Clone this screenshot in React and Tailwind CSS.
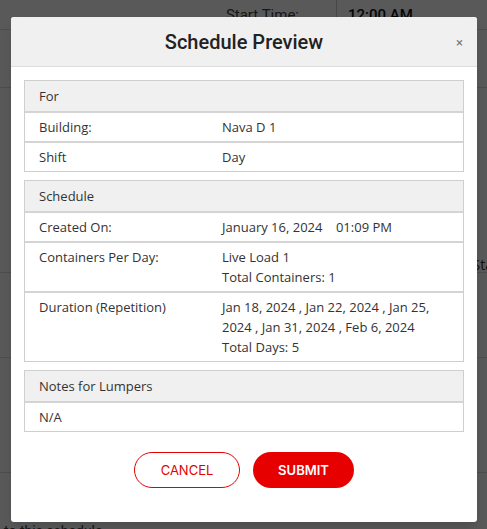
import React from "react"

const sections = [
  {
    title: "For",
    rows: [
      { label: "Building:", value: ["Nava D 1"] },
      { label: "Shift", value: ["Day"] }
    ]
  },
  {
    title: "Schedule",
    rows: [
      { label: "Created On:", value: ["January 16, 2024\u00a0\u00a0\u00a0\u00a001:09 PM"] },
      { label: "Containers Per Day:", value: ["Live Load 1", "Total Containers: 1"] },
      {
        label: "Duration (Repetition)",
        value: ["Jan 18, 2024 , Jan 22, 2024 , Jan 25, 2024 , Jan 31, 2024 , Feb 6, 2024", "Total Days: 5"]
      }
    ]
  },
  {
    title: "Notes for Lumpers",
    rows: [{ value: ["N/A"] }]
  }
]

function Section({ title, rows }) {
  return (
    <div className="border border-[#cfcfcf]">
      <div className="bg-[#f0f0f0] px-[14px] py-[5px]">{title}</div>
      {rows.map((row, i) => (
        <div
          key={i}
          className={
            row.label
              ? "grid grid-cols-[183px_1fr] border-t-2 border-[#d4d4d4] px-[14px] py-[4px]"
              : "border-t-2 border-[#d4d4d4] px-[14px] py-[4px]"
          }
        >
          {row.label && <div>{row.label}</div>}
          <div className="pr-4">
            {row.value.map((line, j) => (
              <div key={j}>{line}</div>
            ))}
          </div>
        </div>
      ))}
    </div>
  )
}

export default function App() {
  return (
    <div className="relative h-[529px] w-full overflow-hidden bg-white font-['Roboto',sans-serif]">
      {/* page behind the dialog */}
      <div className="flex h-[30px] border-b border-[#ddd]">
        <div className="w-[337px] border-r border-[#ccc] pr-[37px] pt-[4px] text-right text-[15px] text-[#444]">
          Start Time:
        </div>
        <div className="pl-[11px] pt-[4px] text-[15px] font-medium text-[#111]">12:00 AM</div>
      </div>
      <div className="h-[58px] border-b border-[#ddd]" />
      <div className="h-[169px]" />
      <div className="flex h-[16px] justify-end border-b border-[#ddd] pr-0 font-['Open_Sans',sans-serif] text-[14px] leading-[16px] text-[#333]">
        <span className="mr-[-6px]">Sta</span>
      </div>
      <div className="h-[85px] border-b border-[#ddd]" />
      <div className="h-[115px] border-b border-[#ddd]" />
      <div className="pl-[4px] pt-[50px] text-[14px] leading-[16px] text-[#444]">to this schedule</div>

      <div className="absolute inset-0 bg-black/[0.65]" />

      <div className="absolute left-[11px] top-[17px] w-[466px] overflow-hidden rounded-[3px] bg-white shadow-lg">
        <div className="relative flex h-[50px] items-center justify-center border-b border-[#ddd] bg-[#f0f0f0]">
          <h2 className="text-[20px] font-medium text-[#222]">Schedule Preview</h2>
          <span className="absolute right-[14px] top-[19px] text-[13px] leading-none text-[#777]">×</span>
        </div>

        <div className="px-[13px] pt-[13px] font-['Open_Sans',sans-serif] text-[13px] leading-[20px] text-[#333]">
          <div className="flex flex-col gap-2">
            {sections.map((s) => (
              <Section key={s.title} title={s.title} rows={s.rows} />
            ))}
          </div>

          <div className="flex justify-center gap-[13px] pb-[34px] pt-[20px] font-['Inter',sans-serif]">
            <button className="h-[36px] w-[106px] rounded-full border border-[#e60000] text-[13px] text-[#e60000]">
              CANCEL
            </button>
            <button className="h-[36px] w-[101px] rounded-full bg-[#e60000] text-[13px] font-semibold text-white">
              SUBMIT
            </button>
          </div>
        </div>
      </div>
    </div>
  )
}
